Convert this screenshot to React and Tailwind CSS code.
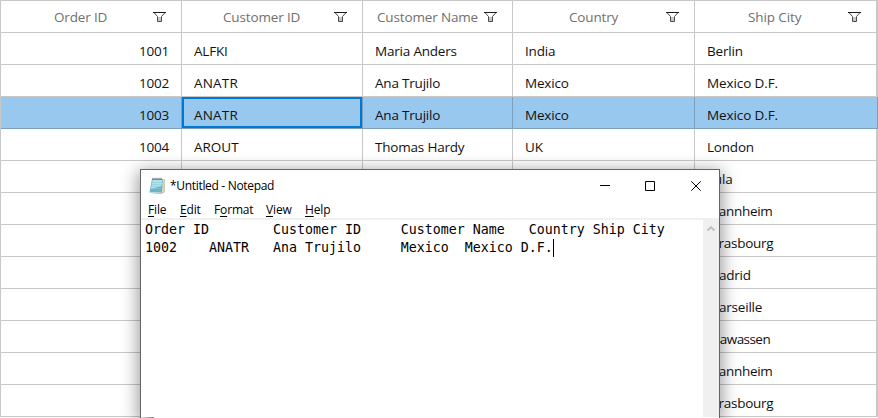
const columns = [
  { title: 'Order ID', cell: 'w-[181px]', pad: 'pl-[53px]', spacing: 'tracking-[-0.15px]' },
  { title: 'Customer ID', cell: 'w-[181px]', pad: 'pl-[41px]', spacing: 'tracking-[-0.15px]' },
  { title: 'Customer Name', cell: 'w-[150px]', pad: 'pl-[14px]', spacing: 'tracking-[-0.15px]' },
  { title: 'Country', cell: 'w-[182px]', pad: 'pl-[56px]', spacing: 'tracking-[-0.15px]' },
  { title: 'Ship City', cell: 'w-[183px]', pad: 'pl-[53px]', spacing: 'tracking-[-0.1px]' },
];

const rows = [
  ['1001', 'ALFKI', 'Maria Anders', 'India', 'Berlin'],
  ['1002', 'ANATR', 'Ana Trujilo', 'Mexico', 'Mexico D.F.'],
  ['1003', 'ANATR', 'Ana Trujilo', 'Mexico', 'Mexico D.F.'],
  ['1004', 'AROUT', 'Thomas Hardy', 'UK', 'London'],
  ['', '', '', '', 'Lula'],
  ['', '', '', '', 'Mannheim'],
  ['', '', '', '', 'Strasbourg'],
  ['', '', '', '', 'Madrid'],
  ['', '', '', '', 'Marseille'],
  ['', '', '', '', 'Tsawassen'],
  ['', '', '', '', 'Mannheim'],
  ['', '', '', '', 'Strasbourg'],
];

const spacings = {
  ANATR: 'tracking-[0.2px]',
  AROUT: 'tracking-[0px]',
  'Mexico D.F.': 'tracking-[-0.1px]',
  Mannheim: 'tracking-[-0.3px]',
  Strasbourg: 'tracking-[-0.3px]',
  Tsawassen: 'tracking-[-0.55px]',
};

function FilterIcon() {
  return (
    <svg className="block h-[12px] w-[13px]" viewBox="0 0 13 12" fill="none">
      <path d="M5 6h3v4H5z" fill="#c8c8c8" />
      <path d="M.6 1.200 4.500 5.500v5h4v-5l3.900-4.300" stroke="#4a4a4a" />
      <path d="M0 1.500h13" stroke="#1c1c1c" />
    </svg>
  );
}

function Grid() {
  return (
    <div className="w-[878px] border-t border-l border-[#c8c8c8] text-[13.5px] leading-[18px] text-[#111]">
      <div className="flex h-8 border-b border-[#c8c8c8]">
        {columns.map((c, i) => (
          <div
            key={c.title}
            className={`${c.cell} ${c.pad} flex shrink-0 items-center justify-between border-[#c8c8c8] whitespace-nowrap text-[#707070] ${i === 4 ? 'border-r-2 pr-[15px]' : 'border-r pr-[15px]'}`}
          >
            <span className={c.spacing}>{c.title}</span>
            <FilterIcon />
          </div>
        ))}
      </div>
      {rows.map((r, n) => {
        const selected = n === 2;
        return (
          <div
            key={n}
            className={`flex h-8 border-b ${selected ? 'border-[#7ba0be] bg-[#99c8ee]' : 'border-[#c8c8c8]'}`}
          >
            {r.map((v, i) => (
              <div
                key={i}
                className={`${columns[i].cell} shrink-0 pt-[9px] whitespace-nowrap ${spacings[v] ?? 'tracking-[-0.2px]'} ${i === 0 ? 'pr-[12px] text-right' : 'pl-[12px]'} ${selected ? 'border-[#7ba0be]' : 'border-[#c8c8c8]'} ${i === 4 && !selected ? 'border-r-2' : 'border-r'} ${selected && i === 1 ? 'shadow-[inset_0_0_0_2px_#0078d7]' : ''}`}
              >
                {v}
              </div>
            ))}
          </div>
        );
      })}
    </div>
  );
}

function NotepadIcon() {
  return (
    <svg className="block h-[17px] w-[16px]" viewBox="0 0 16 17">
      <path d="M14.500 2h1v13L13 16.500H2l11-1z" fill="#a99467" />
      <path d="M13.800 2h.9v13l-1.700.8z" fill="#f1ead5" />
      <path d="M3 2h11l-1 13.500H.5z" fill="#6fb3c4" />
      <path d="M3.600 3h9.600L12.500 9 1.900 12z" fill="#b4e2ea" />
      <path d="M3.200 5.500h9.500M2.900 7.500h9.500M2.600 9.500h9.500M2.300 11.500h9.500" stroke="#8ccbd8" strokeWidth=".6" />
      <path d="M4 .8v2M6 .8v2M8 .8v2M10 .8v2M12 .8v2" stroke="#4b5358" strokeWidth=".9" />
    </svg>
  );
}

const menu = [
  ['', 'F', 'ile', 'w-[32px]'],
  ['', 'E', 'dit', 'w-[34px]'],
  ['F', 'o', 'rmat', 'w-[52px]'],
  ['', 'V', 'iew', 'w-[39px]'],
  ['', 'H', 'elp', 'w-[40px]'],
];

function Notepad() {
  return (
    <div className="absolute top-[169px] left-[140px] flex h-[249px] w-[580px] flex-col border border-b-0 border-[#646464] bg-white text-black shadow-[0_4px_16px_2px_rgba(0,0,0,0.4)]">
      <div className="flex h-[31px] shrink-0 items-center">
        <div className="pl-[8px]">
          <NotepadIcon />
        </div>
        <span className="pl-[5px] text-[12px] tracking-[-0.32px] whitespace-nowrap">*Untitled - Notepad</span>
        <svg className="ml-auto block h-[12px] w-[105px] shrink-0" viewBox="0 0 105 12" fill="none" stroke="#000">
          <path d="M0 5.500h10M45.500 1.500h9v9h-9z" />
          <path d="M91.300 1.300l9.400 9.400M100.700 1.300l-9.400 9.400" />
        </svg>
        <div className="w-[14px] shrink-0" />
      </div>
      <div className="flex h-[17px] shrink-0 pl-[7px] text-[12px] leading-[18px] tracking-[-0.15px]">
        {menu.map(([a, b, c, w]) => (
          <span key={b} className={w}>
            {a}
            <span className="underline decoration-1 underline-offset-2">{b}</span>
            {c}
          </span>
        ))}
      </div>
      <div className="flex grow border-t-2 border-[#f0f0f0]">
        <div className="flex grow flex-col pt-px pl-[4px] font-['DejaVu_Sans_Mono',monospace] text-[13.290px] leading-[18px] whitespace-pre">
          <span>{'Order ID        Customer ID     Customer Name   Country Ship City'}</span>
          <span className="flex">
            {'1002    ANATR   Ana Trujilo     Mexico  Mexico D.F.'}
            <span className="h-[18px] w-px bg-black" />
          </span>
        </div>
        <div className="flex w-[16px] shrink-0 justify-center bg-[#f0f0f0] pt-[5px]">
          <svg className="block h-[7px] w-[8px]" viewBox="0 0 8 7" fill="none" stroke="#bfbfbf" strokeWidth="1.800">
            <path d="M.6 5.500 4 2l3.400 3.500" />
          </svg>
        </div>
      </div>
      <div className="h-px w-[13px] shrink-0 bg-gradient-to-r from-[#e8e8e8] to-[#777]" />
    </div>
  );
}

export default function App() {
  return (
    <div className="relative h-[418px] w-[878px] overflow-hidden bg-white font-['Open_Sans','Noto_Sans',sans-serif]">
      <Grid />
      <Notepad />
    </div>
  );
}
